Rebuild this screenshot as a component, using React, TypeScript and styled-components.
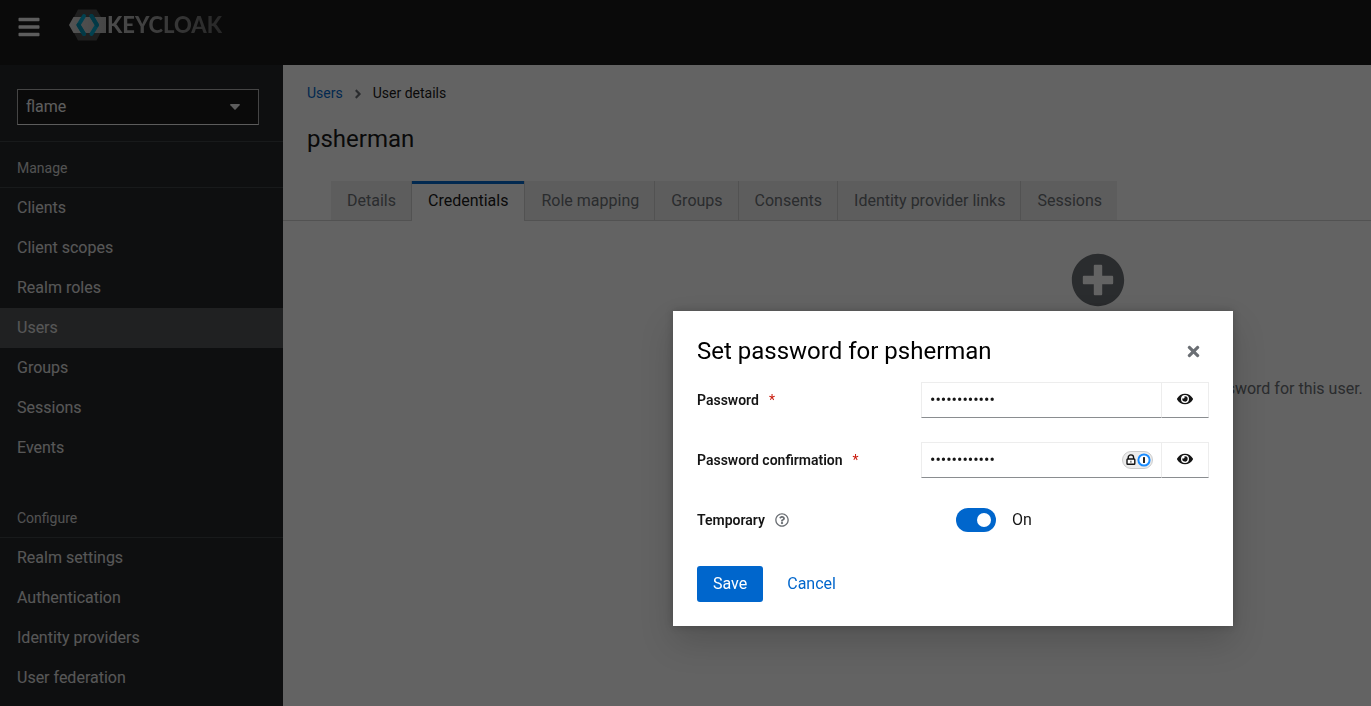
import React, { useState } from 'react';
import styled, { createGlobalStyle } from 'styled-components';
import { FaBars, FaEye, FaPlusCircle, FaRegQuestionCircle, FaTimes, FaAngleRight } from 'react-icons/fa';

const GlobalStyle = createGlobalStyle`
  *, *::before, *::after { box-sizing: border-box; }
  body {
    margin: 0;
    font-family: Roboto, "Liberation Sans", sans-serif;
    font-size: 16px;
    line-height: 24px;
    color: #151515;
    background: #fff;
  }
  button, input, select { font: inherit; }
  h1, h2, p, ul, ol { margin: 0; padding: 0; font-weight: 400; }
  ul, ol { list-style: none; }
  a { text-decoration: none; }
`;

const Page = styled.div`
  display: flex;
  flex-direction: column;
  height: 100vh;
  overflow: hidden;
`;

const Masthead = styled.header`
  display: flex;
  align-items: flex-start;
  gap: 28px;
  height: 65px;
  flex: none;
  padding: 9px 17px;
  background: #151515;
`;

const MenuButton = styled.button`
  display: flex;
  padding: 6px 0 0;
  border: 0;
  background: none;
  color: #f0f0f0;
`;

const Brand = styled.a`
  display: flex;
  align-items: center;
  height: 32px;
`;

const BrandName = styled.span`
  font-family: Lato, sans-serif;
  font-size: 22px;
  font-weight: 900;
  line-height: 32px;
  color: transparent;
  background: linear-gradient(90deg, #c4c4c4, #626262);
  background-clip: text;
`;

const Body = styled.div`
  display: flex;
  flex: 1;
  min-height: 0;
`;

const Sidebar = styled.nav`
  flex: none;
  width: 283px;
  overflow: hidden;
  background: #212427;
`;

const RealmPicker = styled.div`
  padding: 24px 24px 16px 17px;
  border-bottom: 1px solid #3c3f42;
`;

const RealmField = styled.div`
  position: relative;
  display: flex;
`;

const RealmSelect = styled.select`
  appearance: none;
  width: 100%;
  height: 36px;
  padding: 0 8px;
  border: 1px solid #b0b0b0;
  border-bottom-color: #ededed;
  border-radius: 0;
  background: #151515;
  color: #f0f0f0;
`;

const RealmCaret = styled.svg`
  position: absolute;
  top: 15px;
  right: 19px;
  pointer-events: none;
`;

const NavSection = styled.section`
  & + & { margin-top: 24px; }
`;

const NavTitle = styled.h2`
  padding: 16px 17px 8px;
  border-bottom: 1px solid #3c3f42;
  font-size: 14px;
  line-height: 21px;
  color: #d2d2d2;
`;

const NavLink = styled.a<{ $current?: boolean }>`
  display: block;
  padding: 8px 17px;
  color: #e0e0e0;
  background: ${(p) => (p.$current ? '#4f5255' : 'transparent')};
`;

const Main = styled.main`
  flex: 1;
  min-width: 0;
  overflow: hidden;
`;

const PageHead = styled.div`
  padding: 18px 24px 26px;
`;

const Breadcrumb = styled.ol`
  display: flex;
  align-items: center;
  font-size: 14px;
  line-height: 21px;
`;

const Crumb = styled.li`
  display: flex;
  align-items: center;
  svg { margin: 0 8px; color: #6a6e73; }
`;

const CrumbLink = styled.a`
  color: #06c;
`;

const PageTitle = styled.h1`
  margin-top: 19px;
  font-size: 24px;
  line-height: 32px;
`;

const Tabs = styled.div`
  display: flex;
  padding-left: 48px;
  border-bottom: 1px solid #d2d2d2;
`;

const Tab = styled.button`
  height: 39px;
  padding: 0 15px 0 16px;
  border: 0 solid #d2d2d2;
  border-right-width: 1px;
  white-space: nowrap;
  color: #6a6e73;
  background: #f0f0f0;
  &:first-child, &:last-child { border-right-width: 0; }
  &[aria-selected="true"] {
    height: 40px;
    margin-bottom: -1px;
    padding: 0 16px;
    border-left-width: 1px;
    color: #151515;
    background: linear-gradient(#06c 3px, #fff 3px) border-box;
  }
`;

const EmptyState = styled.div`
  display: flex;
  flex-direction: column;
  align-items: center;
  width: 546px;
  margin: 32px 0 0 auto;
  color: #6a6e73;
`;

const EmptyText = styled.p`
  margin-top: 70px;
  padding-right: 8px;
  white-space: nowrap;
`;

const Backdrop = styled.div`
  position: fixed;
  inset: 0;
  display: flex;
  justify-content: flex-end;
  align-items: flex-start;
  padding: 311px 138px 0 0;
  background: rgba(3, 3, 3, 0.62);
`;

const Dialog = styled.section`
  width: 560px;
  padding: 24px;
  background: #fff;
  box-shadow: 0 16px 32px rgba(3, 3, 3, 0.16), 0 0 8px rgba(3, 3, 3, 0.2);
`;

const DialogHead = styled.header`
  display: flex;
  justify-content: space-between;
  align-items: flex-start;
  margin-bottom: 15px;
`;

const DialogTitle = styled.h2`
  font-size: 24px;
  line-height: 32px;
  color: #000;
`;

const CloseButton = styled.button`
  display: flex;
  padding: 8px 7px 7px;
  border: 0;
  background: none;
  color: #6a6e73;
`;

const Form = styled.form`
  display: flex;
  flex-direction: column;
  gap: 24px;
`;

const FormRow = styled.div`
  display: grid;
  grid-template-columns: 224px 1fr;
  align-items: center;
  min-height: 36px;
`;

const LabelCell = styled.div`
  display: flex;
  align-items: center;
  gap: 10px;
  font-size: 14px;
  line-height: 21px;
  font-weight: 600;
`;

const Required = styled.span`
  font-weight: 400;
  color: #c9190b;
`;

const HelpButton = styled.button`
  display: flex;
  padding: 0;
  border: 0;
  background: none;
  color: #6a6e73;
`;

const InputGroup = styled.div`
  position: relative;
  display: flex;
  height: 36px;
`;

const PasswordInput = styled.input`
  flex: 1;
  min-width: 0;
  padding: 0 8px;
  border: 1px solid #ededed;
  border-bottom-color: #8a8d90;
  border-radius: 0;
  outline: 0;
  background: #fff;
  color: #151515;
`;

const RevealButton = styled.button`
  display: flex;
  align-items: center;
  justify-content: center;
  width: 47px;
  padding: 0 0 2px;
  border: solid #ededed;
  border-width: 1px 1px 1px 0;
  border-bottom-color: #8a8d90;
  background: #fff;
  color: #151515;
`;

const ManagerBadge = styled.svg`
  position: absolute;
  top: 9px;
  right: 56px;
`;

const SwitchLabel = styled.label`
  display: flex;
  align-items: center;
  gap: 16px;
  padding-left: 35px;
`;

const SwitchInput = styled.input`
  appearance: none;
  display: flex;
  align-items: center;
  width: 40px;
  height: 24px;
  margin: 0;
  padding: 0 5px;
  border-radius: 12px;
  background: #8a8d90;
  &::before {
    content: "";
    width: 14px;
    height: 14px;
    border-radius: 50%;
    background: #fff;
  }
  &:checked {
    justify-content: flex-end;
    background: #06c;
  }
`;

const Actions = styled.div`
  display: flex;
  gap: 8px;
  margin-top: 4px;
`;

const ActionButton = styled.button<{ $primary?: boolean }>`
  height: 36px;
  padding: 0 16px;
  border: 0;
  border-radius: 3px;
  color: ${(p) => (p.$primary ? '#fff' : '#06c')};
  background: ${(p) => (p.$primary ? '#06c' : 'transparent')};
`;

const manage = ['Clients', 'Client scopes', 'Realm roles', 'Users', 'Groups', 'Sessions', 'Events'];
const configure = ['Realm settings', 'Authentication', 'Identity providers', 'User federation'];
const tabs = ['Details', 'Credentials', 'Role mapping', 'Groups', 'Consents', 'Identity provider links', 'Sessions'];

function KeycloakMark() {
  return (
    <svg width="38" height="32" viewBox="0 0 38 32" aria-hidden="true">
      <defs>
        <linearGradient id="band" x1="0" x2="1">
          <stop offset="0" stopColor="#d6d6d6" />
          <stop offset="1" stopColor="#b2b2b2" />
        </linearGradient>
      </defs>
      <path d="M9 0.500H27.500L32 8V23L27.500 31.500H9L4 22V10Z" fill="#4d4d4d" />
      <path d="M4.500 8H37V24H4.500L0 16Z" fill="url(#band)" />
      <path d="M15 7L9.500 16L15 25" fill="none" stroke="#00a5cc" strokeWidth="4" strokeLinejoin="round" strokeLinecap="round" />
      <path d="M9.500 16L15 25" fill="none" stroke="#0090b3" strokeWidth="4" strokeLinecap="round" />
      <path d="M22.500 7L28 16L22.500 25" fill="none" stroke="#00a5cc" strokeWidth="4" strokeLinejoin="round" strokeLinecap="round" />
      <path d="M22.500 7L28 16" fill="none" stroke="#0090b3" strokeWidth="4" strokeLinecap="round" />
    </svg>
  );
}

function PasswordManagerBadge() {
  return (
    <ManagerBadge width="31" height="18" viewBox="0 0 31 18" aria-hidden="true">
      <rect x="0.500" y="0.500" width="30" height="17" rx="8.500" fill="#ececec" stroke="#cbcbcb" />
      <path d="M6.200 8V6.600a2.700 2.700 0 0 1 5.400 0V8" fill="none" stroke="#111" strokeWidth="1.400" />
      <rect x="5" y="8" width="7.800" height="5.200" rx="0.800" fill="#fff" stroke="#111" strokeWidth="1.400" />
      <rect x="8.300" y="9.700" width="1.200" height="2" fill="#555" />
      <circle cx="22" cy="9" r="5.600" fill="#fff" stroke="#1a8cff" strokeWidth="2" />
      <rect x="21" y="6" width="2" height="6" rx="0.500" fill="#222" />
    </ManagerBadge>
  );
}

function NavGroup({ title, items }: { title: string; items: string[] }) {
  return (
    <NavSection>
      <NavTitle>{title}</NavTitle>
      <ul>
        {items.map((item) => (
          <li key={item}>
            <NavLink href="#" $current={item === 'Users'}>{item}</NavLink>
          </li>
        ))}
      </ul>
    </NavSection>
  );
}

function PasswordRow({ id, label, managed }: { id: string; label: string; managed?: boolean }) {
  const [shown, setShown] = useState(false);
  return (
    <FormRow>
      <LabelCell>
        <label htmlFor={id}>{label}</label>
        <Required aria-hidden="true">*</Required>
      </LabelCell>
      <InputGroup>
        <PasswordInput id={id} type={shown ? 'text' : 'password'} defaultValue="wallabyway42" />
        {managed && <PasswordManagerBadge />}
        <RevealButton type="button" aria-label="Show password" onClick={() => setShown(!shown)}>
          <FaEye size={16} />
        </RevealButton>
      </InputGroup>
    </FormRow>
  );
}

export default function App() {
  const [temporary, setTemporary] = useState(true);
  return (
    <>
      <GlobalStyle />
      <Page>
        <Masthead>
          <MenuButton aria-label="Global navigation"><FaBars size={24} /></MenuButton>
          <Brand href="#">
            <KeycloakMark />
            <BrandName>KEYCLOAK</BrandName>
          </Brand>
        </Masthead>
        <Body>
          <Sidebar>
            <RealmPicker>
              <RealmField>
                <RealmSelect aria-label="Realm" defaultValue="flame">
                  <option>flame</option>
                </RealmSelect>
                <RealmCaret width="10" height="6" viewBox="0 0 10 6" aria-hidden="true">
                  <path d="M0.800 0H9.200Q10.400 0.300 9.600 1.200L5.600 5.400Q5 6 4.400 5.400L0.400 1.200Q-0.400 0.300 0.800 0Z" fill="#f0f0f0" />
                </RealmCaret>
              </RealmField>
            </RealmPicker>
            <NavGroup title="Manage" items={manage} />
            <NavGroup title="Configure" items={configure} />
          </Sidebar>
          <Main>
            <PageHead>
              <Breadcrumb>
                <Crumb><CrumbLink href="#">Users</CrumbLink><FaAngleRight size={14} /></Crumb>
                <Crumb>User details</Crumb>
              </Breadcrumb>
              <PageTitle>psherman</PageTitle>
            </PageHead>
            <Tabs role="tablist">
              {tabs.map((tab) => (
                <Tab key={tab} role="tab" aria-selected={tab === 'Credentials'}>{tab}</Tab>
              ))}
            </Tabs>
            <EmptyState>
              <FaPlusCircle size={54} />
              <EmptyText>This user does not have any credentials. You can set password for this user.</EmptyText>
            </EmptyState>
          </Main>
        </Body>
      </Page>
      <Backdrop>
        <Dialog role="dialog" aria-modal="true" aria-labelledby="dialog-title">
          <DialogHead>
            <DialogTitle id="dialog-title">Set password for psherman</DialogTitle>
            <CloseButton aria-label="Close"><FaTimes size={17} /></CloseButton>
          </DialogHead>
          <Form onSubmit={(e) => e.preventDefault()}>
            <PasswordRow id="password" label="Password" />
            <PasswordRow id="confirmation" label="Password confirmation" managed />
            <FormRow>
              <LabelCell>
                <label htmlFor="temporary">Temporary</label>
                <HelpButton type="button" aria-label="More info"><FaRegQuestionCircle size={14} /></HelpButton>
              </LabelCell>
              <SwitchLabel>
                <SwitchInput
                  id="temporary"
                  type="checkbox"
                  role="switch"
                  checked={temporary}
                  onChange={() => setTemporary(!temporary)}
                />
                {temporary ? 'On' : 'Off'}
              </SwitchLabel>
            </FormRow>
            <Actions>
              <ActionButton type="submit" $primary>Save</ActionButton>
              <ActionButton type="button">Cancel</ActionButton>
            </Actions>
          </Form>
        </Dialog>
      </Backdrop>
    </>
  );
}
